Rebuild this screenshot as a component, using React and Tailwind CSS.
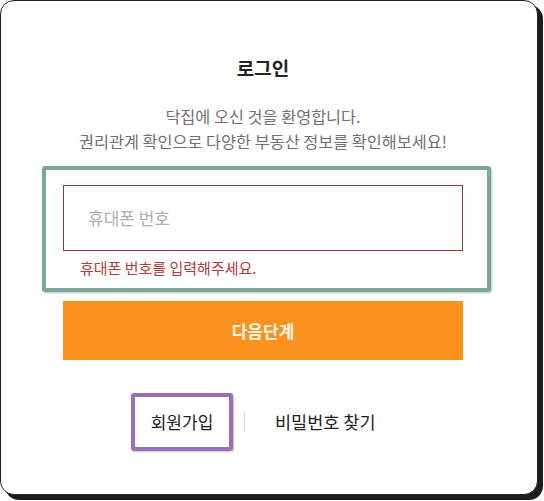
export default function App() {
  const font = { fontFamily: '"Noto Sans CJK KR", "Noto Sans", sans-serif' };
  return (
    <div className="w-[544px] h-[501px] bg-white" style={font}>
      <div className="w-[538px] h-[495px] bg-white border border-[#222] rounded-[14px] shadow-[5px_5px_0_#1c1c1c] pt-[54px]">
        <div className="ml-[62px] w-[400px] flex flex-col">
          <h1 className="text-center text-[19px] leading-[26px] font-bold text-[#222]">로그인</h1>
          <p className="mt-[23px] text-center text-[16.3px] leading-[25px] text-[#707070] whitespace-nowrap -mx-[10px]">
            닥집에 오신 것을 환영합니다.
            <br />
            권리관계 확인으로 다양한 부동산 정보를 확인해보세요!
          </p>
          <div className="mt-[12px] -ml-[21px] -mr-[28px] border-4 border-[#7aa797] rounded-[3px] shadow-[1px_1px_2px_rgba(0,0,0,0.25)] pt-[15px] pb-[10px] pl-[17px] pr-[24px]">
            <div className="h-[66px] border border-[#8c3b3b] flex items-center pl-[24px] text-[17px] text-[#b0b0b0]">
              휴대폰 번호
            </div>
            <p className="mt-[7px] pl-[17px] text-[15px] leading-[20px] text-[#b23b3b]">
              휴대폰 번호를 입력해주세요.
            </p>
          </div>
          <button className="mt-[9px] h-[59px] w-[400px] bg-[#fb911e] text-[#fff8e8] text-[17px] font-bold flex items-center justify-center">
            다음단계
          </button>
          <div className="mt-[33px] flex items-center">
            <div className="ml-[68px] w-[102px] h-[58px] border-4 border-[#9a6fb6] rounded-[3px] shadow-[1px_1px_2px_rgba(0,0,0,0.25)] flex items-center justify-center text-[17px] text-[#222]">
              회원가입
            </div>
            <div className="ml-[11px] w-px h-[20px] bg-[#d6d6d6]" />
            <div className="ml-[30px] text-[17.5px] text-[#222]">비밀번호 찾기</div>
          </div>
        </div>
      </div>
    </div>
  );
}
